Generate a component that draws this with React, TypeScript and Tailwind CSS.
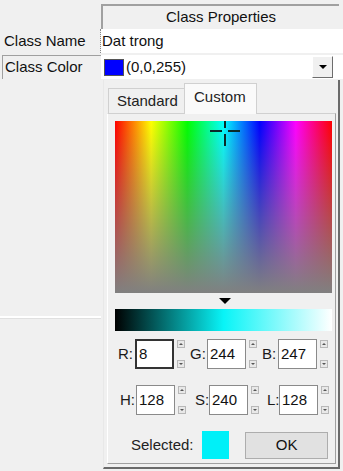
import type { ReactNode } from "react";

function Spinner() {
  return (
    <div className="flex h-[30px] w-[8px] flex-col justify-between py-[1px]">
      <div className="flex h-[8px] w-[8px] items-center justify-center border border-[#b8b8b8] bg-[#e8e8e8]">
        <div className="h-0 w-0 border-x-[2px] border-b-[2px] border-x-transparent border-b-[#555]" />
      </div>
      <div className="flex h-[8px] w-[8px] items-center justify-center border border-[#b8b8b8] bg-[#e8e8e8]">
        <div className="h-0 w-0 border-x-[2px] border-t-[2px] border-x-transparent border-t-[#555]" />
      </div>
    </div>
  );
}

function Field({
  label,
  value,
  labelWidth,
  focused,
}: {
  label: string;
  value: string;
  labelWidth: string;
  focused?: boolean;
}) {
  return (
    <div className="flex items-center">
      <span className={`${labelWidth} text-[15px] text-[#1a1a1a]`}>{label}</span>
      <div
        className={`flex h-[30px] w-[39px] items-center bg-white pl-[2px] text-[15px] text-[#111] ${
          focused ? "border-2 border-[#333]" : "border border-[#8a8a8a]"
        }`}
      >
        {value}
      </div>
      <div className="ml-[3px]">
        <Spinner />
      </div>
    </div>
  );
}

function Row({ children }: { children: ReactNode }) {
  return <div className="flex h-[24px] items-stretch">{children}</div>;
}

export default function App() {
  return (
    <div
      className="relative h-[471px] w-[343px] overflow-hidden bg-[#f0f0f0] text-[#111]"
      style={{ fontFamily: '"Liberation Sans", Arial, sans-serif' }}
    >
      {/* property grid */}
      <div className="flex flex-col pt-[4px]">
        <div className="flex h-[25px]">
          <div className="w-[101px]" />
          <div className="mr-[4px] flex flex-1 items-center justify-center border-l-2 border-t-2 border-[#a0a0a0] pb-[1px] text-[15px]">
            Class Properties
          </div>
        </div>
        <Row>
          <div className="flex w-[101px] items-center border-r border-dotted border-[#888] pl-[4px] text-[15px]">
            Class Name
          </div>
          <div className="flex flex-1 items-center bg-white pl-[1px] text-[15px]">Dat trong</div>
        </Row>
        <div className="h-[2px]" />
        <Row>
          <div className="ml-[2px] flex w-[99px] items-center border-l border-t border-[#a0a0a0] pl-[2px] text-[15px]">
            Class Color
          </div>
          <div className="flex flex-1 items-center bg-white pl-[3px] text-[15px]">
            <div className="h-[17px] w-[20px] border border-[#555] bg-[#0000ff]" />
            <span className="ml-[2px]">(0,0,255)</span>
            <div className="ml-auto mr-[10px] flex h-[22px] w-[21px] items-center justify-center border border-b-[#6d6d6d] border-l-white border-r-[#6d6d6d] border-t-white bg-[#f0f0f0]">
              <div className="h-0 w-0 border-x-[4px] border-t-[4px] border-x-transparent border-t-black" />
            </div>
          </div>
        </Row>
        <div className="mt-[237px] flex">
          <div className="w-[101px] border-b border-t-2 border-b-[#e0e0e0] border-t-white" />
        </div>
      </div>

      {/* dropdown popup */}
      <div className="absolute left-[103px] top-[80px] h-[389px] w-[237px] border-b-2 border-l border-r-2 border-b-[#6a6a6a] border-l-[#e8e8e8] border-r-[#6a6a6a] bg-[#f0f0f0]">
        {/* tabs */}
        <div className="relative h-[33px]">
          <div className="absolute left-[4px] top-[8px] flex h-[25px] w-[77px] items-center border border-b-0 border-[#d0d0d0] bg-[#f0f0f0] pl-[8px] text-[15px] text-[#222]">
            Standard
          </div>
          <div className="absolute left-[80px] top-[3px] z-10 flex h-[31px] w-[73px] items-start border border-b-0 border-[#d0d0d0] bg-[#fafafa] pl-[9px] pt-[2px] text-[15px] text-[#222]">
            Custom
          </div>
        </div>
        {/* panel */}
        <div className="ml-[3px] flex h-[351px] w-[229px] flex-col border border-b-[#a0a0a0] border-l-white border-r-[#a0a0a0] border-t-[#d0d0d0] px-[7px] pt-[7px]">
          <div className="relative h-[172px] w-[217px] bg-[linear-gradient(to_bottom,rgba(128,128,128,0),#808080),linear-gradient(to_right,#ff0000,#ffff00,#00ff00,#00ffff,#0000ff,#ff00ff,#ff0000)]">
            <svg className="absolute left-[94px] top-0" width="32" height="27" viewBox="0 0 32 27">
              <path d="M1 10h12M19 10h12M16 0v7M16 13v12" stroke="#0a2a2a" strokeWidth="2" />
            </svg>
          </div>
          <div className="relative h-[16px]">
            <div className="absolute left-[104px] top-[5px] h-0 w-0 border-x-[6px] border-t-[6px] border-x-transparent border-t-black" />
          </div>
          <div className="h-[22px] w-[217px] bg-[linear-gradient(to_right,#000000,#08f4f7_50%,#ffffff)]" />
          <div className="mt-[8px] flex pl-[3px]">
            <Field label="R:" value="8" labelWidth="w-[17px]" focused />
            <div className="ml-[5px]">
              <Field label="G:" value="244" labelWidth="w-[17px]" />
            </div>
            <div className="ml-[5px]">
              <Field label="B:" value="247" labelWidth="w-[16px]" />
            </div>
          </div>
          <div className="mt-[16px] flex pl-[5px]">
            <Field label="H:" value="128" labelWidth="w-[16px]" />
            <div className="ml-[9px]">
              <Field label="S:" value="240" labelWidth="w-[14px]" />
            </div>
            <div className="ml-[8px]">
              <Field label="L:" value="128" labelWidth="w-[12px]" />
            </div>
          </div>
          <div className="mt-[16px] flex items-center">
            <span className="ml-[16px] text-[15px] text-[#222]">Selected:</span>
            <div className="ml-[8px] h-[28px] w-[28px] bg-[#00f0f8]" />
            <div className="ml-[16px] flex h-[27px] w-[84px] items-center justify-center border border-[#adadad] bg-[#e1e1e1] text-[15px] text-[#111]">
              OK
            </div>
          </div>
        </div>
      </div>
    </div>
  );
}
